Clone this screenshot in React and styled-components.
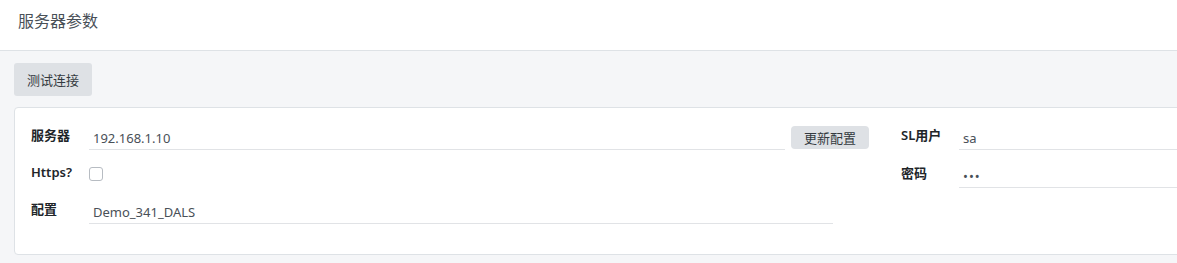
import React, { useState } from 'react';
import styled, { createGlobalStyle } from 'styled-components';

const GlobalStyle = createGlobalStyle`
  html, body {
    margin: 0;
    padding: 0;
    background: #f5f6f8;
    overflow: hidden;
  }
  body {
    font-family: "Segoe UI", "Noto Sans", "Noto Sans CJK SC", sans-serif;
    color: #212529;
  }
`;

const Page = styled.div`
  width: 1400px;
  min-height: 263px;
  background: #f5f6f8;
`;

const Header = styled.div`
  height: 51px;
  box-sizing: border-box;
  background: #fff;
  border-bottom: 1px solid #dee2e6;
  padding: 10px 18px 0;
`;

const Title = styled.h1`
  margin: 0;
  font-size: 16px;
  line-height: 22px;
  font-weight: 400;
  color: #495057;
`;

const Body = styled.div`
  padding: 12px 14px 0;
`;

const Button = styled.button`
  font-family: inherit;
  border: none;
  background: #dee1e5;
  color: #343a40;
  border-radius: ${p => (p.small ? '4px' : '3px')};
  font-size: 13px;
  height: ${p => (p.small ? '23px' : '33px')};
  width: 78px;
  padding: 0;
  cursor: pointer;
  flex-shrink: 0;
`;

const Card = styled.div`
  margin-top: 11px;
  background: #fff;
  border: 1px solid #dee2e6;
  border-radius: 4px;
  padding: 16px 16px 30px;
  display: flex;
  gap: 32px;
`;

const Column = styled.div`
  width: ${p => p.width};
  display: flex;
  flex-direction: column;
  gap: 12px;
`;

const Row = styled.div`
  display: flex;
  align-items: center;
  height: ${p => p.height || '26px'};
  padding-right: ${p => p.trail || '0'};
`;

const Label = styled.label`
  width: 58px;
  flex-shrink: 0;
  font-size: 13px;
  font-weight: 600;
  color: #212529;
  line-height: 20px;
  margin-top: -4px;
`;

const Input = styled.input`
  flex: 1;
  min-width: 0;
  height: 26px;
  box-sizing: border-box;
  border: none;
  border-bottom: 1px solid #e1e3e6;
  font-family: inherit;
  font-size: 13px;
  color: #495057;
  padding: 2px 4px 0;
  margin-right: ${p => (p.gap ? '6px' : '0')};
  outline: none;
  background: transparent;
  letter-spacing: ${p => (p.type === 'password' ? '1px' : 'normal')};
`;

const Check = styled.input`
  appearance: none;
  width: 14px;
  height: 14px;
  margin: 0;
  border: 1px solid #b7bcc2;
  border-radius: 3px;
  background: #fff;
  cursor: pointer;
`;

const App = () => {
  const [server, setServer] = useState('192.168.1.10');
  const [config, setConfig] = useState('Demo_341_DALS');
  const [user, setUser] = useState('sa');
  const [password, setPassword] = useState('sa1');
  const [https, setHttps] = useState(false);

  return (
    <>
      <GlobalStyle />
      <Page>
        <Header>
          <Title>服务器参数</Title>
        </Header>
        <Body>
          <Button>测试连接</Button>
          <Card>
            <Column width="838px">
              <Row>
                <Label>服务器</Label>
                <Input gap value={server} onChange={e => setServer(e.target.value)} />
                <Button small>更新配置</Button>
              </Row>
              <Row height="24px">
                <Label>Https?</Label>
                <Check type="checkbox" checked={https} onChange={e => setHttps(e.target.checked)} />
              </Row>
              <Row trail="36px">
                <Label>配置</Label>
                <Input value={config} onChange={e => setConfig(e.target.value)} />
              </Row>
            </Column>
            <Column width="400px">
              <Row>
                <Label>SL用户</Label>
                <Input value={user} onChange={e => setUser(e.target.value)} />
              </Row>
              <Row>
                <Label>密码</Label>
                <Input type="password" value={password} onChange={e => setPassword(e.target.value)} />
              </Row>
            </Column>
          </Card>
        </Body>
      </Page>
    </>
  );
};

export default App;
